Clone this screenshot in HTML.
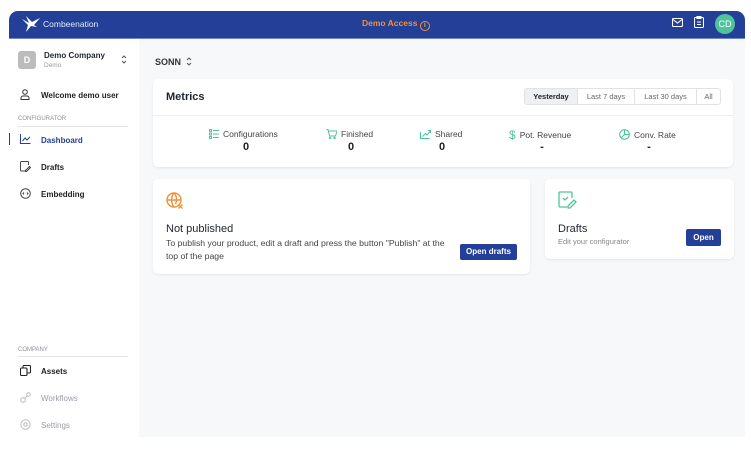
<!DOCTYPE html>
<html><head><style>
*{margin:0;padding:0;box-sizing:border-box}
body{width:751px;height:464px;background:#fff;font-family:"Liberation Sans",sans-serif;position:relative;overflow:hidden;color:#1f2430}
.abs{position:absolute}
.hdr{left:9px;top:11px;width:736px;height:28px;background:#233f97;border-radius:9px 9px 0 0;border-bottom:1px solid #6f86c9}
.side{left:9px;top:39px;width:130px;height:398px;background:#fff}
.main{left:139px;top:39px;width:606px;height:398px;background:#f7f8fa}
.card{background:#fff;border-radius:5px;box-shadow:0 1px 2px rgba(0,0,0,.08)}
.nav{font-size:8px;font-weight:bold;color:#222}
.sec{font-size:6px;color:#8a8f9a}
.btn{background:#233f97;color:#fff;font-size:8px;font-weight:bold;border-radius:2px;text-align:center}
.m{font-size:8.5px;color:#444;display:flex;align-items:center;gap:4px}
.v{font-size:11px;font-weight:bold;color:#222;text-align:center}
svg{display:block}
</style></head><body>
<div class="abs hdr"></div>
<svg class="abs" style="left:20px;top:14px" width="22" height="20" viewBox="0 0 22 20"><path d="M2 5 L9 9 L6 2 L12 8 L20 4 L14 11 L17 13 L11 12 L6 18 L8 11 Z" fill="#fff"/></svg>
<div class="abs" style="left:43px;top:19px;font-size:8.5px;color:#e6ebf7">Combeenation</div>
<div class="abs" style="left:362px;top:18px;font-size:8.5px;color:#f0913a;font-weight:bold">Demo Access <span style="display:inline-block;width:10px;height:10px;border:1px solid #f0913a;border-radius:50%;font-size:7px;text-align:center;line-height:8px;vertical-align:-1px">i</span></div>
<svg class="abs" style="left:672px;top:18px" width="11" height="9" viewBox="0 0 11 9" fill="none" stroke="#fff" stroke-width="1.1"><rect x=".5" y=".5" width="10" height="8" rx="1"/><path d="M1 1.5l4.5 3.5 4.5-3.5"/></svg>
<svg class="abs" style="left:694px;top:16px" width="10" height="12" viewBox="0 0 10 12" fill="none" stroke="#fff" stroke-width="1.1"><rect x=".5" y="1.5" width="9" height="10" rx="1"/><rect x="3" y=".5" width="4" height="2"/><path d="M3 6h4M3 8.5h4"/></svg>
<div class="abs" style="left:715px;top:14px;width:20px;height:20px;border-radius:50%;background:#4fc49a;color:#fff;font-size:9px;text-align:center;line-height:20px">CD</div>

<div class="abs side"></div>
<div class="abs main"></div>

<div class="abs" style="left:18px;top:51px;width:18px;height:18px;background:#bcbcbc;border-radius:3px;color:#fff;font-size:9px;font-weight:bold;text-align:center;line-height:18px">D</div>
<div class="abs" style="left:44px;top:51px;font-size:8px;font-weight:bold">Demo Company</div>
<div class="abs" style="left:44px;top:62px;font-size:6.5px;color:#999">Demo</div>
<svg class="abs" style="left:121px;top:55px" width="6" height="9" viewBox="0 0 6 9" fill="none" stroke="#555" stroke-width="1"><path d="M1 3l2-2 2 2M1 6l2 2 2-2"/></svg>
<svg class="abs" style="left:20px;top:89px" width="10" height="11" viewBox="0 0 10 11" fill="none" stroke="#333" stroke-width="1"><circle cx="5" cy="3" r="2.3"/><path d="M1 10.5v-1.5a2 2 0 0 1 2-2h4a2 2 0 0 1 2 2v1.5z"/></svg>
<div class="abs nav" style="left:41px;top:91px">Welcome demo user</div>
<div class="abs sec" style="left:18px;top:116px">CONFIGURATOR</div>
<div class="abs" style="left:18px;top:126px;width:110px;height:1px;background:#e3e4e8"></div>
<div class="abs" style="left:9px;top:133px;width:1px;height:12px;background:#233f97"></div>
<svg class="abs" style="left:20px;top:134px" width="11" height="10" viewBox="0 0 11 10" fill="none" stroke="#233f97" stroke-width="1"><path d="M.5 0v9.5h10M2.5 7l2.5-3 2 2 3-3"/></svg>
<div class="abs nav" style="left:41px;top:136px;color:#233f97">Dashboard</div>
<svg class="abs" style="left:20px;top:161px" width="11" height="11" viewBox="0 0 11 11" fill="none" stroke="#444" stroke-width="1"><path d="M6 10H1.5a1 1 0 0 1-1-1V1.5a1 1 0 0 1 1-1h6a1 1 0 0 1 1 1V4"/><path d="M5.5 9.5l4-4 1 1-4 4h-1z"/></svg>
<div class="abs nav" style="left:41px;top:163px">Drafts</div>
<svg class="abs" style="left:20px;top:188px" width="11" height="11" viewBox="0 0 11 11" fill="none" stroke="#444" stroke-width="1"><circle cx="5.5" cy="5.5" r="4.8"/><path d="M4 4.5l-1 1 1 1M7 4.5l1 1-1 1"/></svg>
<div class="abs nav" style="left:41px;top:190px">Embedding</div>
<div class="abs sec" style="left:18px;top:347px">COMPANY</div>
<div class="abs" style="left:18px;top:356px;width:110px;height:1px;background:#e3e4e8"></div>
<svg class="abs" style="left:20px;top:365px" width="11" height="11" viewBox="0 0 11 11" fill="none" stroke="#222" stroke-width="1.1"><rect x=".5" y="3" width="6.5" height="7.5" rx="1"/><path d="M3 3V1.5a1 1 0 0 1 1-1h5.5a1 1 0 0 1 1 1V7a1 1 0 0 1-1 1H7"/></svg>
<div class="abs nav" style="left:41px;top:367px">Assets</div>
<svg class="abs" style="left:20px;top:392px" width="11" height="11" viewBox="0 0 11 11" fill="none" stroke="#bbb" stroke-width="1"><circle cx="3" cy="8" r="2.3"/><circle cx="8.5" cy="2.5" r="1.8"/><path d="M4.5 6.5L7 4"/></svg>
<div class="abs nav" style="left:41px;top:394px;color:#9a9ea8;font-weight:normal">Workflows</div>
<svg class="abs" style="left:20px;top:419px" width="11" height="11" viewBox="0 0 11 11" fill="none" stroke="#bbb" stroke-width="1"><circle cx="5.5" cy="5.5" r="4.7"/><circle cx="5.5" cy="5.5" r="1.7"/></svg>
<div class="abs nav" style="left:41px;top:421px;color:#9a9ea8;font-weight:normal">Settings</div>

<div class="abs" style="left:155px;top:57px;font-size:9px;font-weight:bold;color:#333">SONN</div>
<svg class="abs" style="left:186px;top:57px" width="6" height="9" viewBox="0 0 6 9" fill="none" stroke="#555" stroke-width="1"><path d="M1 3l2-2 2 2M1 6l2 2 2-2"/></svg>

<div class="abs card" style="left:153px;top:79px;width:580px;height:88px"></div>
<div class="abs" style="left:166px;top:91px;font-size:11px;font-weight:bold">Metrics</div>
<div class="abs" style="left:153px;top:115px;width:580px;height:1px;background:#eceef1"></div>
<div class="abs" style="left:524px;top:88px;width:197px;height:17px;border:1px solid #e0e2e6;border-radius:3px;font-size:7.5px;color:#666;display:flex">
<div style="width:53px;background:#eef0f4;color:#222;font-weight:bold;text-align:center;line-height:15px;border-right:1px solid #e0e2e6">Yesterday</div>
<div style="width:57px;text-align:center;line-height:15px;border-right:1px solid #e0e2e6">Last 7 days</div>
<div style="width:62px;text-align:center;line-height:15px;border-right:1px solid #e0e2e6">Last 30 days</div>
<div style="flex:1;text-align:center;line-height:15px">All</div></div>

<div class="abs m" style="left:209px;top:129px"><svg width="10" height="10" viewBox="0 0 10 10" fill="none" stroke="#4fc49a" stroke-width="1"><rect x=".5" y=".5" width="2" height="2"/><rect x=".5" y="4" width="2" height="2"/><rect x=".5" y="7.5" width="2" height="2"/><path d="M4 1.5h6M4 5h6M4 8.5h6"/></svg>Configurations</div>
<div class="abs v" style="left:236px;top:141px;width:20px">0</div>
<div class="abs m" style="left:326px;top:129px"><svg width="11" height="10" viewBox="0 0 11 10" fill="none" stroke="#4fc49a" stroke-width="1"><path d="M.5 .5h1.5l1.5 6.5h6l1.5-5H2.5"/><circle cx="4" cy="9" r=".7"/><circle cx="8.5" cy="9" r=".7"/></svg>Finished</div>
<div class="abs v" style="left:341px;top:141px;width:20px">0</div>
<div class="abs m" style="left:420px;top:129px"><svg width="11" height="10" viewBox="0 0 11 10" fill="none" stroke="#4fc49a" stroke-width="1"><path d="M.5 3v6.5h9M2.5 7.5l3-3 1.5 1.5 3.5-4M8 1.5h2.5V4"/></svg>Shared</div>
<div class="abs v" style="left:432px;top:141px;width:20px">0</div>
<div class="abs m" style="left:509px;top:128px"><span style="color:#4fc49a;font-size:12px">$</span>Pot. Revenue</div>
<div class="abs v" style="left:532px;top:141px;width:20px">-</div>
<div class="abs m" style="left:619px;top:129px"><svg width="11" height="11" viewBox="0 0 11 11" fill="none" stroke="#4fc49a" stroke-width="1.1"><circle cx="5.5" cy="5.5" r="4.8"/><path d="M5.5 .7v4.8L2 8.8M5.5 5.5h4.8"/></svg>Conv. Rate</div>
<div class="abs v" style="left:639px;top:141px;width:20px">-</div>

<div class="abs card" style="left:153px;top:179px;width:377px;height:95px"></div>
<svg class="abs" style="left:166px;top:192px" width="19" height="18" viewBox="0 0 19 18" fill="none" stroke="#f0913a" stroke-width="1.4"><circle cx="8" cy="8" r="7"/><path d="M1 8h14M8 1c-3 3-3 11 0 14M8 1c3 3 3 8 1.5 11"/><path d="M12.5 12.5l4 4M16.5 12.5l-4 4" stroke-width="1.3"/></svg>
<div class="abs" style="left:166px;top:223px;font-size:11px">Not published</div>
<div class="abs" style="left:166px;top:237px;font-size:8.7px;color:#444;white-space:nowrap;line-height:12.5px">To publish your product, edit a draft and press the button "Publish" at the<br>top of the page</div>
<div class="abs btn" style="left:460px;top:244px;width:57px;height:16px;line-height:16px">Open drafts</div>

<div class="abs card" style="left:545px;top:179px;width:189px;height:80px"></div>
<svg class="abs" style="left:558px;top:191px" width="20" height="18" viewBox="0 0 20 18" fill="none" stroke="#4fc49a" stroke-width="1.3"><path d="M9 16H2a1 1 0 0 1-1-1V2a1 1 0 0 1 1-1h11a1 1 0 0 1 1 1v5"/><path d="M5 7l2 2 3-3"/><path d="M10 15l6-6 2 2-6 6h-2z"/></svg>
<div class="abs" style="left:558px;top:223px;font-size:11px">Drafts</div>
<div class="abs" style="left:558px;top:237px;font-size:7.5px;color:#888">Edit your configurator</div>
<div class="abs btn" style="left:686px;top:229px;width:35px;height:17px;line-height:17px">Open</div>
</body></html>
